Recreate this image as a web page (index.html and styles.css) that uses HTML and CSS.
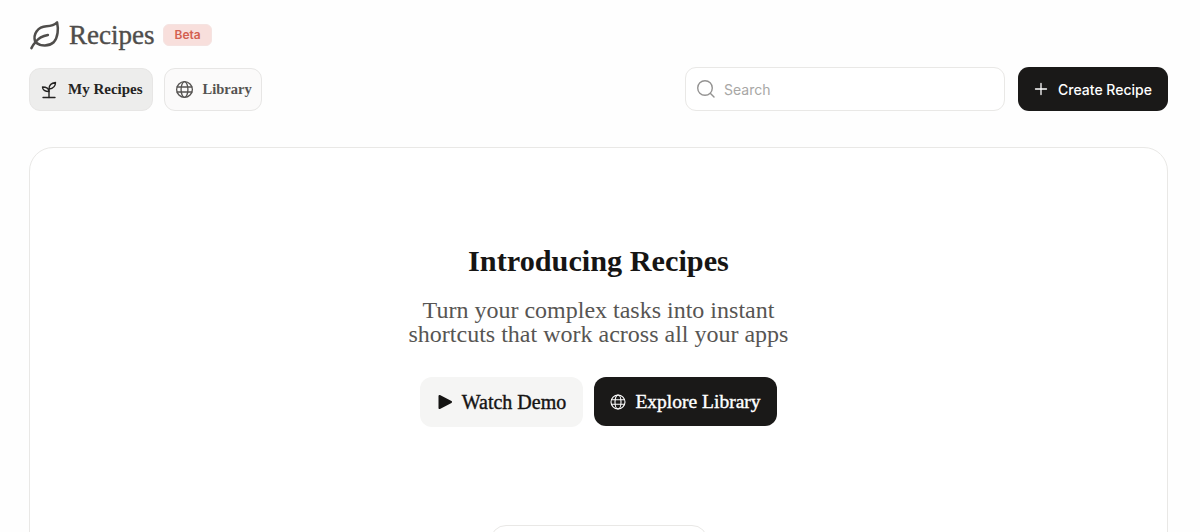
FILE: index.html
```html
<!DOCTYPE html>
<html lang="en">
<head>
    <meta charset="UTF-8">
    <title>Recipes</title>
    <link rel="stylesheet" href="styles.css">
</head>
<body>
    <div class="page">
        <div class="title-row">
            <svg class="leaf-icon" viewBox="0 0 32 32" fill="none" stroke="currentColor" stroke-width="2.6" stroke-linecap="round" stroke-linejoin="round">
                <path d="M2.5 29 C4 26 5 24.5 6.5 23 C3.5 14 9.5 7 18 6.5 C23 6.2 26.5 5 29 2.5 C30.5 9 30 18 25.5 23 C20.5 27.5 12.5 27.5 6.5 23"/>
                <path d="M7 22.5 C10 18.5 14 16.5 19.5 15.5"/>
            </svg>
            <h1>Recipes</h1>
            <span class="badge">Beta</span>
        </div>

        <div class="toolbar">
            <div class="tabs">
                <button class="tab active">
                    <svg class="tab-icon" viewBox="2 1 16 18" fill="none" stroke="currentColor" stroke-width="1.4" stroke-linecap="round" stroke-linejoin="round">
                        <path d="M4 17.5 H16"/>
                        <path d="M10 17.5 V9"/>
                        <path d="M10 11.5 C10 8.5 7.5 7 3.5 7 C3.5 10 6 11.5 10 11.5 Z"/>
                        <path d="M10 9 C10 5.5 12.5 3 16.5 2.5 C16.5 6 14 8.5 10 9 Z"/>
                    </svg>
                    My Recipes
                </button>
                <button class="tab">
                    <svg class="tab-icon" viewBox="0 0 20 20" fill="none" stroke="currentColor" stroke-width="1.4">
                        <circle cx="10" cy="10" r="8.3"/>
                        <path d="M1.7 7.4 H18.3 M1.7 12.6 H18.3"/>
                        <ellipse cx="10" cy="10" rx="3.6" ry="8.3"/>
                    </svg>
                    Library
                </button>
            </div>
            <div class="actions">
                <div class="search">
                    <svg class="search-icon" viewBox="0 0 20 20" fill="none" stroke="currentColor" stroke-width="1.4" stroke-linecap="round">
                        <circle cx="9" cy="9" r="7.3"/>
                        <path d="M14.5 14.5 L18 18"/>
                    </svg>
                    <span>Search</span>
                </div>
                <button class="create-button">
                    <svg class="plus-icon" viewBox="0 0 14 14" fill="none" stroke="currentColor" stroke-width="1.3" stroke-linecap="round">
                        <path d="M7 1.5 V12.5 M1.5 7 H12.5"/>
                    </svg>
                    Create Recipe
                </button>
            </div>
        </div>

        <div class="hero">
            <h2>Introducing Recipes</h2>
            <p>Turn your complex tasks into instant<br>shortcuts that work across all your apps</p>
            <div class="hero-buttons">
                <button class="hero-button light">
                    <svg class="hero-icon" viewBox="0 0 16 16" fill="currentColor" stroke="currentColor" stroke-width="2" stroke-linejoin="round">
                        <path d="M2.5 2 L14 8 L2.5 14 Z"/>
                    </svg>
                    Watch Demo
                </button>
                <button class="hero-button dark">
                    <svg class="hero-icon" viewBox="0 0 16 16" fill="none" stroke="currentColor" stroke-width="1.1">
                        <circle cx="8" cy="8" r="7"/>
                        <path d="M1.2 5.8 H14.8 M1.2 10.2 H14.8"/>
                        <ellipse cx="8" cy="8" rx="3" ry="7"/>
                    </svg>
                    Explore Library
                </button>
            </div>
            <div class="preview-card"></div>
        </div>
    </div>
</body>
</html>
```

FILE: styles.css
```css
:root {
    --dark: #1a1918;
    --text: #4f4d4b;
    --line: #e9e8e6;
}

* {
    margin: 0;
    padding: 0;
    box-sizing: border-box;
}

html, body {
    height: 100%;
    overflow: hidden;
}

body {
    background: #fefefe;
    font-family: 'Liberation Serif', serif;
}

button {
    font-family: inherit;
    border: none;
    display: flex;
    align-items: center;
}

.page {
    padding: 18px 32px 0 29px;
}

.title-row {
    display: flex;
    align-items: center;
    height: 34px;
    color: var(--text);
}

.leaf-icon {
    width: 31px;
    height: 31px;
    margin-right: 9px;
}

h1 {
    font-size: 27px;
    font-weight: 400;
    -webkit-text-stroke: 0.4px currentColor;
    margin-right: 9px;
}

.badge {
    font-family: 'Inter', sans-serif;
    font-size: 12px;
    font-weight: 600;
    color: #d3604f;
    background: #f8dfdc;
    border: 1px solid #f5e3e1;
    border-radius: 6px;
    padding: 3px 10px;
    line-height: 14px;
    margin-bottom: 1px;
}

.toolbar {
    display: flex;
    justify-content: space-between;
    margin-top: 15px;
}

.tabs {
    display: flex;
    gap: 11px;
    margin-top: 1px;
}

.tab {
    height: 43px;
    padding: 0 9px 0 10px;
    gap: 9px;
    font-size: 14.5px;
    font-weight: 700;
    color: #555351;
    background: #fbfafa;
    border: 1.5px solid #e7e6e5;
    border-radius: 11px;
}

.tab.active {
    color: #242322;
    background: #ededec;
    font-size: 15px;
    gap: 10px;
}

.tab-icon {
    width: 19px;
    height: 19px;
}

.tab.active .tab-icon {
    width: 18px;
    height: 18px;
}

.actions {
    display: flex;
    gap: 13px;
}

.search {
    width: 320px;
    height: 44px;
    display: flex;
    align-items: center;
    gap: 8px;
    padding: 0 10px;
    background: #fff;
    border: 1.5px solid var(--line);
    border-radius: 11px;
    font-family: 'Inter', sans-serif;
    font-size: 14px;
    color: #a8a7a5;
}

.search-icon {
    width: 20px;
    height: 20px;
    color: #949392;
}

.create-button {
    width: 150px;
    height: 44px;
    justify-content: center;
    gap: 10px;
    background: var(--dark);
    color: #fff;
    border-radius: 11px;
    font-family: 'Inter', sans-serif;
    font-size: 14px;
    font-weight: 500;
}

.plus-icon {
    width: 14px;
    height: 14px;
}

.hero {
    margin-top: 36px;
    height: 500px;
    border: 1.5px solid var(--line);
    border-radius: 24px;
    display: flex;
    flex-direction: column;
    align-items: center;
    padding-top: 93px;
    background: #fff;
}

.hero h2 {
    font-size: 30.25px;
    font-weight: 700;
    line-height: 40px;
    color: #161514;
}

.hero p {
    margin-top: 17px;
    font-size: 24px;
    line-height: 24px;
    color: #575553;
    text-align: center;
}

.hero-buttons {
    display: flex;
    align-items: flex-start;
    gap: 11px;
    margin-top: 31px;
}

.hero-button {
    justify-content: center;
    height: 49px;
    gap: 9px;
    font-size: 20px;
    font-weight: 400;
    -webkit-text-stroke: 0.4px currentColor;
    border-radius: 12px;
}

.hero-button.light {
    width: 163px;
    height: 50px;
    background: #f5f5f4;
    color: #151413;
}

.hero-button.dark {
    width: 183px;
    font-size: 19.5px;
    background: var(--dark);
    color: #fff;
}

.hero-icon {
    width: 16px;
    height: 16px;
}

.preview-card {
    width: 218px;
    height: 80px;
    margin-top: 98px;
    flex-shrink: 0;
    border: 1.5px solid var(--line);
    border-radius: 16px;
}
```
